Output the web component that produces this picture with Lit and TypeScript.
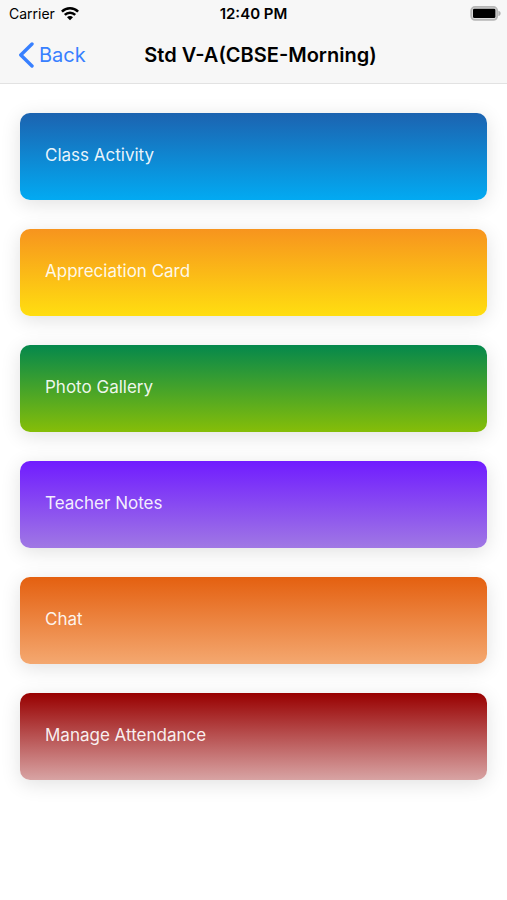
import { LitElement, html, css } from "lit";
import { customElement } from "lit/decorators.js";

interface MenuItem {
  label: string;
  tone: string;
}

const ITEMS: MenuItem[] = [
  { label: "Class Activity", tone: "blue" },
  { label: "Appreciation Card", tone: "yellow" },
  { label: "Photo Gallery", tone: "green" },
  { label: "Teacher Notes", tone: "purple" },
  { label: "Chat", tone: "orange" },
  { label: "Manage Attendance", tone: "red" },
];

@customElement("status-bar")
class StatusBar extends LitElement {
  static styles = css`
    :host {
      display: grid;
      grid-template-columns: 1fr auto 1fr;
      align-items: center;
      height: 28px;
      padding: 0 6px;
      font-size: 14px;
      line-height: 20px;
    }
    .carrier {
      display: flex;
      align-items: center;
      gap: 6px;
      padding-left: 3px;
    }
    .time {
      font-size: 15px;
      font-weight: 600;
    }
    .battery {
      justify-self: end;
    }
    svg {
      display: block;
    }
  `;

  render() {
    return html`
      <div class="carrier">
        <span>Carrier</span>
        <svg width="18" height="14" viewBox="0 0 18 14" aria-hidden="true">
          <g fill="none" stroke="#000" stroke-width="2.5">
            <path d="M0.9 4.6C5.4 0.2 12.6 0.2 17.1 4.6" />
            <path d="M3.8 7.9C6.7 4.9 11.3 4.9 14.2 7.9" />
          </g>
          <path d="M9 13.2L6 10.2C7.6 8.6 10.4 8.6 12 10.2Z" />
        </svg>
      </div>
      <span class="time">12:40 PM</span>
      <svg class="battery" width="31" height="16" viewBox="0 0 31 16" aria-hidden="true">
        <rect x="1.2" y="0.9" width="26" height="13" rx="3.8" fill="#dedede" stroke="#b6b6b6" stroke-width="1.8" />
        <rect x="3" y="2.7" width="22.4" height="9.4" rx="1.4" />
        <path d="M28.4 4.8C31.4 5.8 31.4 9 28.4 10Z" fill="#b0b0b0" />
      </svg>
    `;
  }
}

@customElement("nav-bar")
class NavBar extends LitElement {
  static styles = css`
    :host {
      display: grid;
      grid-template-columns: 1fr auto 1fr;
      align-items: center;
      box-sizing: border-box;
      height: 56px;
      padding: 0 18px 2px;
      border-bottom: 1px solid #e2e2e2;
    }
    .back {
      display: flex;
      align-items: center;
      gap: 5px;
      justify-self: start;
      padding: 0;
      border: 0;
      background: none;
      color: #3880ff;
      font: inherit;
      font-size: 20px;
      line-height: 28px;
      cursor: pointer;
    }
    .title {
      margin: 0 0 0 14px;
      font-size: 20px;
      line-height: 28px;
      font-weight: 600;
    }
  `;

  render() {
    return html`
      <button class="back" type="button">
        <svg width="16" height="26" viewBox="0 0 16 26" aria-hidden="true">
          <path d="M14 2L2.8 13L14 24" fill="none" stroke="currentColor" stroke-width="3.4" stroke-linecap="round" stroke-linejoin="round" />
        </svg>
        <span>Back</span>
      </button>
      <h1 class="title">Std V-A(CBSE-Morning)</h1>
    `;
  }
}

@customElement("app-root")
class AppRoot extends LitElement {
  static styles = css`
    :host {
      display: block;
      min-height: 100vh;
      background: #fff;
      color: #000;
      font-family: Inter, "Liberation Sans", sans-serif;
    }
    .top {
      background: #f7f7f7;
    }
    .menu {
      display: flex;
      flex-direction: column;
      gap: 29px;
      padding: 29px 20px;
    }
    .card {
      height: 87px;
      padding: 0 25px 3px;
      border: 0;
      border-radius: 10px;
      box-shadow: 0 4px 20px rgba(0, 0, 0, 0.12);
      color: rgba(255, 255, 255, 0.92);
      font: inherit;
      font-size: 17px;
      line-height: 24px;
      text-align: left;
      cursor: pointer;
    }
    .blue {
      background: linear-gradient(#1c63b0, #02aaf2);
    }
    .yellow {
      background: linear-gradient(#f7941e, #ffde10);
    }
    .green {
      background: linear-gradient(#04884c, #86be08);
    }
    .purple {
      background: linear-gradient(#701cff, #a078e4);
    }
    .orange {
      background: linear-gradient(#e46010, #f4a870);
    }
    .red {
      background: linear-gradient(#980000, #d8a4a4);
    }
  `;

  render() {
    return html`
      <header class="top">
        <status-bar></status-bar>
        <nav-bar></nav-bar>
      </header>
      <main class="menu">
        ${ITEMS.map(
          (item) => html`<button class="card ${item.tone}" type="button">${item.label}</button>`
        )}
      </main>
    `;
  }
}
